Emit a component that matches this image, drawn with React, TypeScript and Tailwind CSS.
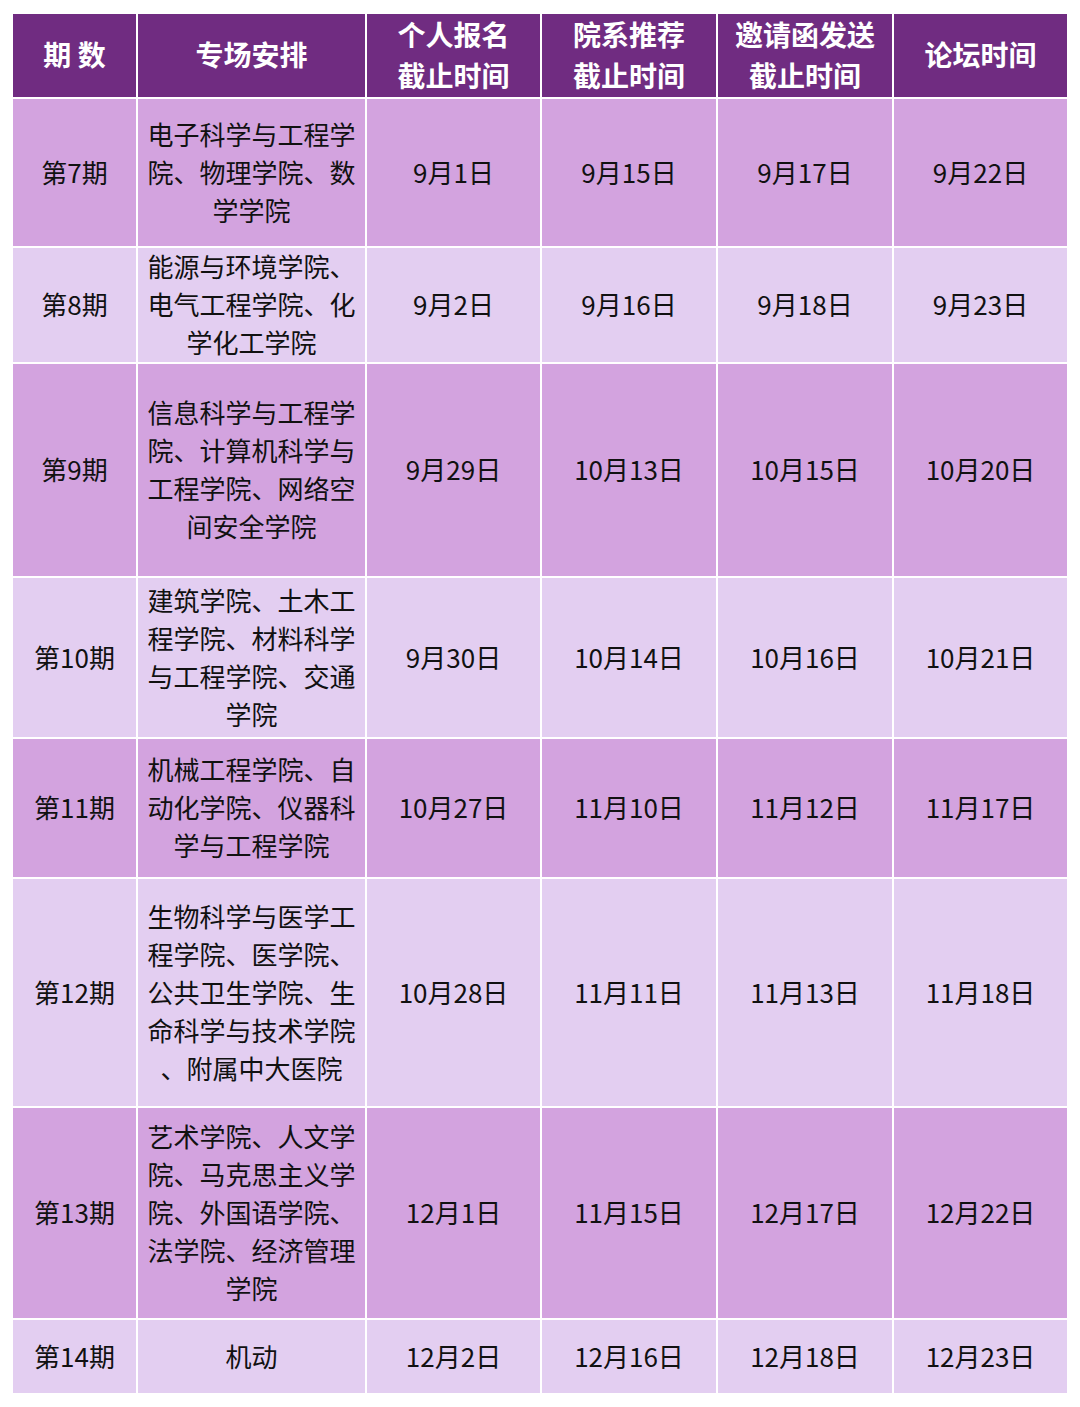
import React from 'react';

type Row = {
  period: string;
  colleges: string[];
  dates: string[];
  height: string;
  dark: boolean;
};

const HEADERS: string[][] = [
  ['期 数'],
  ['专场安排'],
  ['个人报名', '截止时间'],
  ['院系推荐', '截止时间'],
  ['邀请函发送', '截止时间'],
  ['论坛时间'],
];

const ROWS: Row[] = [
  { period: '第7期', colleges: ['电子科学与工程学', '院、物理学院、数', '学学院'], dates: ['9月1日', '9月15日', '9月17日', '9月22日'], height: 'h-[147px]', dark: true },
  { period: '第8期', colleges: ['能源与环境学院、', '电气工程学院、化', '学化工学院'], dates: ['9月2日', '9月16日', '9月18日', '9月23日'], height: 'h-[114px]', dark: false },
  { period: '第9期', colleges: ['信息科学与工程学', '院、计算机科学与', '工程学院、网络空', '间安全学院'], dates: ['9月29日', '10月13日', '10月15日', '10月20日'], height: 'h-[212px]', dark: true },
  { period: '第10期', colleges: ['建筑学院、土木工', '程学院、材料科学', '与工程学院、交通', '学院'], dates: ['9月30日', '10月14日', '10月16日', '10月21日'], height: 'h-[159px]', dark: false },
  { period: '第11期', colleges: ['机械工程学院、自', '动化学院、仪器科', '学与工程学院'], dates: ['10月27日', '11月10日', '11月12日', '11月17日'], height: 'h-[138px]', dark: true },
  { period: '第12期', colleges: ['生物科学与医学工', '程学院、医学院、', '公共卫生学院、生', '命科学与技术学院', '、附属中大医院'], dates: ['10月28日', '11月11日', '11月13日', '11月18日'], height: 'h-[227px]', dark: false },
  { period: '第13期', colleges: ['艺术学院、人文学', '院、马克思主义学', '院、外国语学院、', '法学院、经济管理', '学院'], dates: ['12月1日', '11月15日', '12月17日', '12月22日'], height: 'h-[210px]', dark: true },
  { period: '第14期', colleges: ['机动'], dates: ['12月2日', '12月16日', '12月18日', '12月23日'], height: 'h-[73px]', dark: false },
];

/* one table cell, lines are broken by hand to match the original wrapping */
const Cell: React.FC<{ lines: string[]; dark: boolean; height: string }> = ({ lines, dark, height }) => (
  <div
    className={`${height} flex flex-col items-center justify-center pb-[2px] text-[26px] leading-[38px] text-[#111] ${dark ? 'bg-[#d3a3df]' : 'bg-[#e3cef1]'}`}
  >
    {lines.map((l, i) => (
      <span key={i} className="whitespace-nowrap">{l}</span>
    ))}
  </div>
);

export default function App() {
  return (
    <div
      className="w-[1080px] h-[1407px] bg-white pt-[14px] pl-[13px]"
      style={{ fontFamily: '"Noto Sans CJK SC", "Noto Sans", sans-serif' }}
    >
      <div className="w-[1054px] grid grid-cols-[123px_227px_173px_174px_174px_173px] gap-[2px] bg-white">
        {HEADERS.map((h, i) => (
          <div
            key={i}
            className="h-[83px] bg-[#702c81] flex flex-col items-center justify-center pb-[2px] text-white font-bold text-[28px] leading-[41px]"
          >
            {h.map((l, j) => (
              <span key={j} className="whitespace-nowrap">{l}</span>
            ))}
          </div>
        ))}

        {ROWS.map((r, i) => (
          <React.Fragment key={i}>
            <Cell lines={[r.period]} dark={r.dark} height={r.height} />
            <Cell lines={r.colleges} dark={r.dark} height={r.height} />
            {r.dates.map((d, j) => (
              <Cell key={j} lines={[d]} dark={r.dark} height={r.height} />
            ))}
          </React.Fragment>
        ))}
      </div>
    </div>
  );
}
